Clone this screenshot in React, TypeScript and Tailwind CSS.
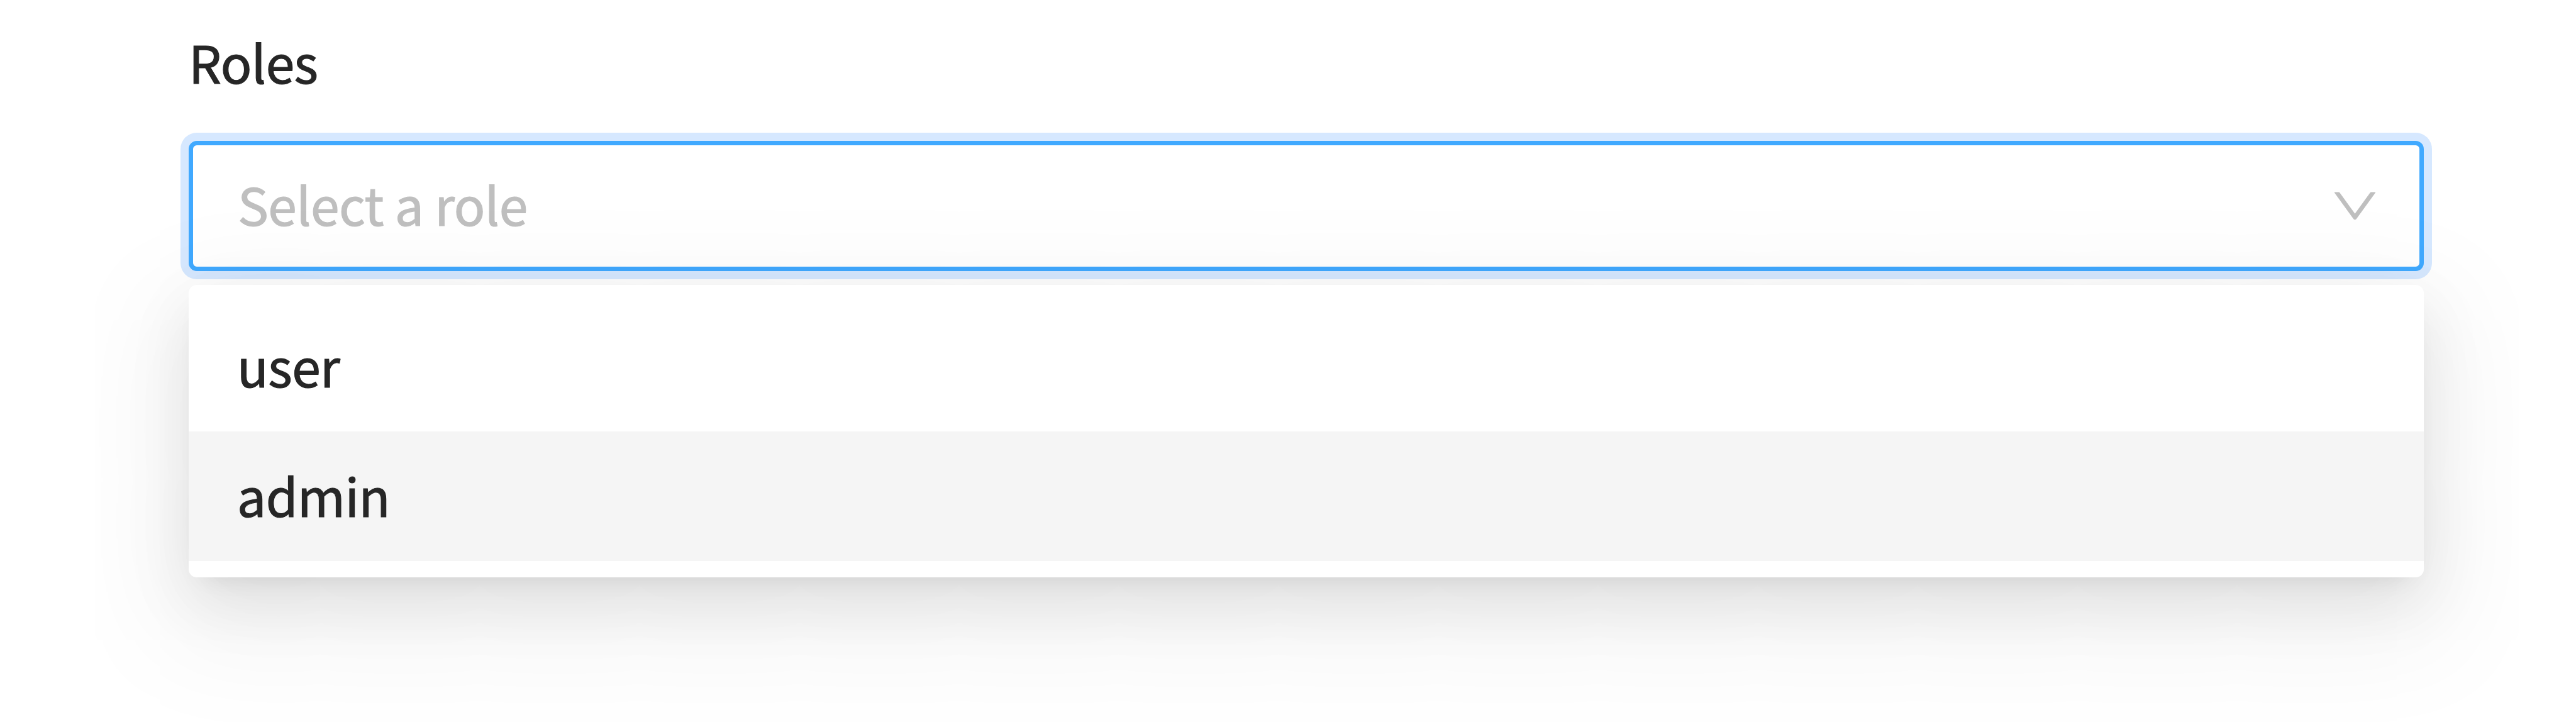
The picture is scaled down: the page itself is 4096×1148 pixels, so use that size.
import { useState } from "react";

const roles = ["user", "admin"];

export default function App() {
  const [active, setActive] = useState("admin");

  return (
    <div className="w-[4096px] h-[1148px] overflow-hidden bg-white pl-[151px] pr-[90px] text-[82px] leading-[130px] tracking-[-0.5px] text-[#262626] font-['Noto_Sans_CJK_SC',sans-serif]">
      {/* Form area, clips the dropdown shadow at its sides */}
      <div className="h-full overflow-hidden pl-[149px] pt-[33px]">
        <label className="block h-[130px] [-webkit-text-stroke:1.2px_#262626]">Roles</label>

        {/* Select box */}
        <div className="mt-[61px] flex h-[207px] w-[3554px] items-center justify-between rounded-[13px] border-[7px] border-[#40a9ff] bg-white pl-[71px] pr-[64px] shadow-[0_0_0_13px_#d6e8ff]">
          <span className="pb-[8px] text-[#bfbfbf] [-webkit-text-stroke:1.2px_#bfbfbf]">Select a role</span>
          <svg viewBox="64 64 896 896" className="size-[77px] fill-[#bfbfbf]">
            <path d="M884 256h-75c-5.1 0-9.9 2.5-12.9 6.6L512 654.2 227.9 262.6c-3-4.1-7.8-6.6-12.9-6.6h-75c-6.5 0-10.3 7.4-6.5 12.7l352.6 486.1c12.8 17.6 39 17.6 51.7 0l352.6-486.1c3.9-5.3.1-12.7-6.4-12.7z" />
          </svg>
        </div>

        {/* Options */}
        <ul className="relative mt-[22px] w-[3554px] rounded-[13px] bg-white py-[26px] shadow-[0_19px_39px_-26px_rgba(0,0,0,0.12),0_39px_103px_0_rgba(0,0,0,0.09),0_58px_180px_52px_rgba(0,0,0,0.052)]">
          {roles.map((role) => (
            <li
              key={role}
              onMouseEnter={() => setActive(role)}
              className={`flex h-[206.5px] items-center px-[77px] pb-[3px] [-webkit-text-stroke:1.2px_#262626] ${active === role ? "bg-[#f5f5f5]" : ""}`}
            >
              {role}
            </li>
          ))}
        </ul>
      </div>
    </div>
  );
}
